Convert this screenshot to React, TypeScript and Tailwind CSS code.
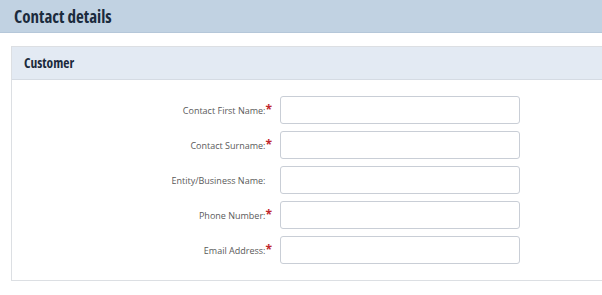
export default function App() {
  const fields = [
    { label: "Contact First Name:", required: true },
    { label: "Contact Surname:", required: true },
    { label: "Entity/Business Name:", required: false },
    { label: "Phone Number:", required: true },
    { label: "Email Address:", required: true },
  ];

  return (
    <div className="w-[602px] h-[295px] bg-white overflow-hidden font-['Open_Sans',sans-serif]">
      {/* Page header */}
      <div className="h-[33px] bg-[#c1d2e2] border-b border-[#b5c7d9] flex items-center pl-[14px]">
        <h1 className="text-[17px] font-bold text-[#1b2b3d] leading-none font-stretch-condensed">Contact details</h1>
      </div>

      {/* Customer card */}
      <div className="mt-[13px] ml-[11px] border border-[#dcdfe3] border-r-0">
        <div className="h-[33px] bg-[#e3eaf3] border-b border-[#d5dbe3] flex items-center pl-[12px]">
          <h2 className="text-[13.5px] font-bold text-[#1b2b3d] font-stretch-condensed">Customer</h2>
        </div>
        <div className="pt-[16px] pb-[16px] flex flex-col gap-[7px]">
          {fields.map((f) => (
            <div key={f.label} className="flex items-center">
              <label className="w-[268px] text-right text-[9px] text-[#5a5a5a] pr-[8px]">
                {f.label}
                <span className={f.required ? "text-[#c0272d] text-[12px] font-bold" : "invisible text-[12px]"}>*</span>
              </label>
              <input className="w-[240px] h-[28px] border border-[#c9ced6] rounded-[3px] bg-white outline-none" />
            </div>
          ))}
        </div>
      </div>
    </div>
  );
}
